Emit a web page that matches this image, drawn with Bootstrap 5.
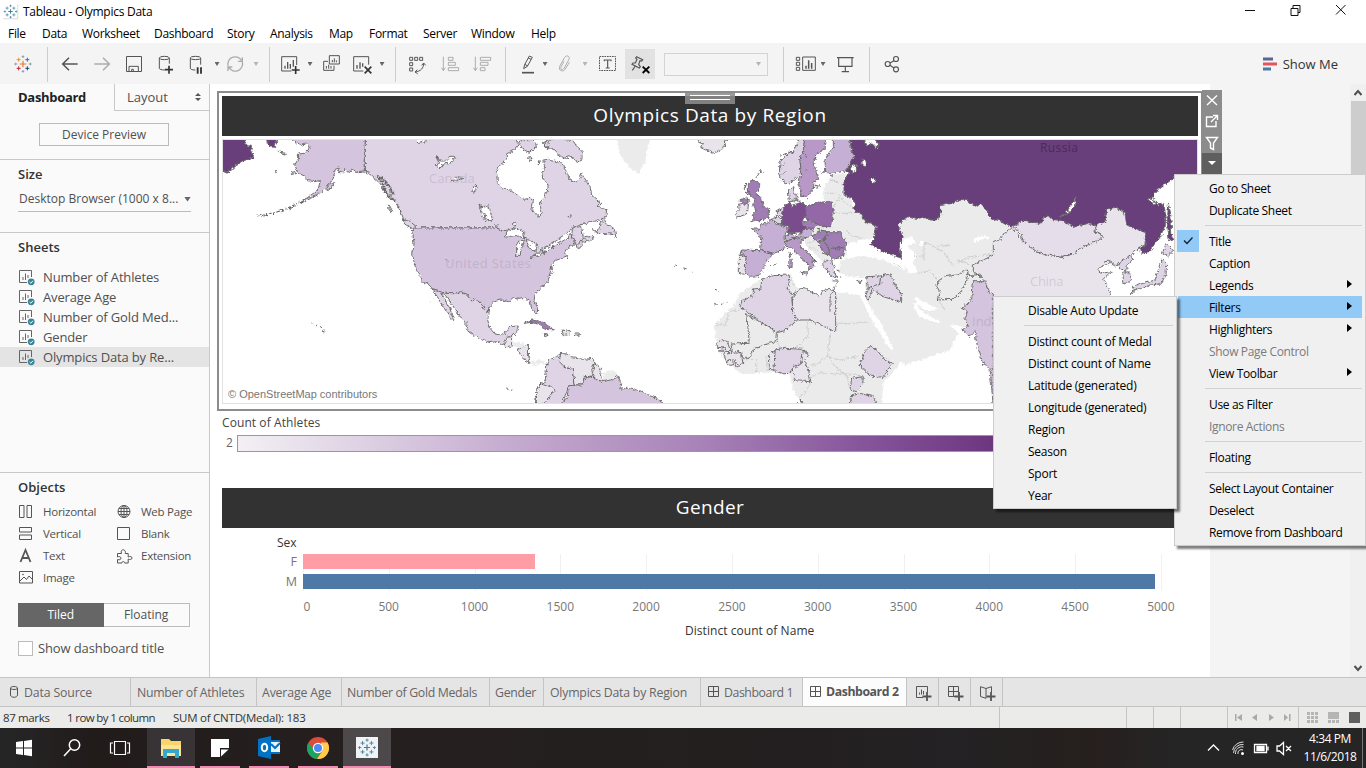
<!DOCTYPE html>
<html lang="en">
<head>
<meta charset="utf-8">
<title>Tableau - Olympics Data</title>
<link href="https://cdn.jsdelivr.net/npm/bootstrap@5.3.0/dist/css/bootstrap.min.css" rel="stylesheet">
<style>
body{width:1366px;height:768px;overflow:hidden;background:#fff;font:12px/16px "Open Sans",sans-serif;color:#000}
svg{display:block;flex:none;overflow:visible}
.ln{fill:none;stroke:#555;stroke-width:3}
.dim{opacity:.45}
.title-row{height:22px;padding-left:3px}
.title-row .name{letter-spacing:-.26px;padding-left:5px;padding-top:1px}
.menu-row{height:21px;padding-left:8px;letter-spacing:-.3px}
.menu-row span{line-height:24px}
.tools{height:41px;background:#f4f4f4;display:grid;grid-template-columns:46px 3px 42px 22px 42px 22px 38px 4px 32px 10px 17px 24px 16px 26px 36px 4px 23px 20px 46px 18px 29px 16px 18px 22px 18px 26px 40px 112px 23px 22px 12px 32px 17px 28px 1fr;align-items:center;padding-top:1px}
.tools>*{justify-self:center}
.tools>i.bar{width:1px;height:35px;background:#ccc}
.caret{width:5px;height:4px;background:#666;clip-path:polygon(0 0,100% 0,50% 100%)}
.pinned{width:30px;height:30px;background:#e2e2e2}
.combo{width:104px;height:23px;border:1px solid #d3d3d3;padding-right:6px}
.work{height:593px}
.side{width:210px;background:#fafafa;border-right:1px solid #c9c9c9;font-size:13px;color:#505050}
.side h2{font-size:13px;line-height:16px;font-weight:600;color:#333;margin:0;padding-left:18px}
.tab-on{width:114px;padding-left:18px;line-height:26px;font-weight:700;color:#222;letter-spacing:-.3px}
.tab-off{width:95px;height:27px;border-left:1px solid #c9c9c9;border-bottom:1px solid #c9c9c9;padding:0 8px 0 12px}
.preview{width:130px;height:23px;margin:12px 0 13px 39px;border:1px solid #bbb;font-size:12px;line-height:21px}
.rule-top{border-top:1px solid #c9c9c9}
.sizer{margin:9px 18px 0;height:21px;border-bottom:1px solid #bbb;font-size:12px;line-height:16px;padding-bottom:4px;padding-left:1px;letter-spacing:.02px}
.sheet{height:20px;padding-left:19px;line-height:20px;gap:8px;letter-spacing:-.15px}
.sheet.on{background:#e4e4e4}
.objs{display:grid;grid-template-columns:24px 74px 24px 1fr;grid-auto-rows:22px;padding-left:19px;align-items:center;font-size:11.5px;letter-spacing:-.25px}
.toggle{margin:14px 19px 0 18px;height:24px;border:1px solid #bbb;line-height:22px;font-size:12px}
.toggle>*{flex:1}.toggle .sel{background:#666;color:#fff;margin:-1px 0 -1px -1px;line-height:24px}
.chk{width:15px;height:15px;border:1px solid #bbb;background:#fff}
.page{width:1000px;background:#fff;padding:7px 7px 0}
.zone{width:986px;height:320px;border:2px solid #8c8c8c;padding:3px}
.hd{height:40px;background:#323232;color:#fff;font-size:19px;line-height:39px;letter-spacing:.35px}
.hd.wide{letter-spacing:.6px}
.atlas{margin-top:3px;height:265px;overflow:hidden;outline:1px solid #e2e2e2;outline-offset:-1px}
.grip{left:466px;top:-2px;width:50px;height:13px;background:#8c8c8ce0;padding:4px 5px}
.grip i{display:block;height:1px;background:#fff;margin-bottom:3px}
.zonebar{left:983px;top:-3px;width:20px;background:#8c8c8c}
.ramp{width:961px;height:17px;border:1px solid #999;background:linear-gradient(90deg,#f3f0f4,#dccfe2 14%,#c6acd0 28%,#a883b8 48%,#845399 66%,#6a347c 80%,#5e2a70)}
.lgd{font-size:12px;color:#444;padding-left:5px;letter-spacing:.08px}
.chart{padding-left:5px;color:#777;font-size:12px}
.rowb{height:20px}.rowb b{width:75px;text-align:right;font-weight:400;font-size:12.500px;margin-right:6px}
.rowb i{height:15px;display:block}
.plot{background:repeating-linear-gradient(90deg,#f0f0f0 0 1px,transparent 1px 85.8px) 81px 0/895px 37px no-repeat;width:976px;height:37px}
.axis{margin-left:38px}
.axis span{width:85.8px;flex:none;text-align:center;font-size:12px}
.axis span:first-child{padding-left:8px}
.gut{width:140px;background:#f4f4f4}
.sb{width:16px;background:#f0f0f0}
.sb .thumb{height:400px;background:#cdcdcd;width:15px}
.tabs{height:30px;background:#e5e5e5;border-top:1px solid #c4c4c4;border-bottom:1px solid #c4c4c4;font-size:12.3px;color:#666;letter-spacing:-.29px}
.tabs>div{border-right:1px solid #c4c4c4;flex:none;height:28px;line-height:30px;white-space:nowrap}
.tabs .cur{background:#fcfcfc;font-weight:700;color:#555;letter-spacing:-.42px;line-height:27px}
.stat{height:21px;background:#ebebea;font-size:11.5px;color:#333;line-height:21px;letter-spacing:-.24px}
.stat .cell{border-left:1px solid #c4c4c4;height:21px}
.task{height:40px;background:linear-gradient(90deg,#262627 0,#211b1a 7%,#261f1f 25%,#231f20 58%,#232224 70%,#261f1d 80%,#252525 86%);color:#fff}
.task>div.app{height:40px;border-bottom:2px solid #ef8ab2;padding-top:2px}
.clock{font-size:12px;line-height:18px;letter-spacing:-.42px}
.pop{position:absolute;background:#f0f0f0;border:1px solid #ccc;box-shadow:3px 3px 2px rgba(0,0,0,.5);padding:2px 3px 3px;letter-spacing:-.34px}
.pop div{height:22px;line-height:23px;padding-left:31px;position:relative}
.pop hr{margin:4px 0;border:0;height:1px;background:#d0d0d0;opacity:1;margin-left:27px}
.pop .off{color:#7b7b7b}.pop .hot{background:#91c9f7}
.pop .more::after{content:"";position:absolute;right:10px;top:6px;border:4px solid transparent;border-left:5px solid #000;border-right:0}
.pop .tick{position:absolute;left:-1px;top:0;width:22px;height:22px;background:#91c9f7}
.p1{left:1174px;top:174px;width:192px;height:372px}
.p2{left:993px;top:296px;width:184px;height:213px;letter-spacing:-.25px}
/* map colours */
.atlas .gy{fill:#ebebeb;stroke:none}.atlas .gl{fill:none;stroke:#cfcfcf;stroke-width:3}
.atlas g.land path{stroke:#666;stroke-width:2.8;stroke-linejoin:round}
.v0{fill:#e9e4ec}.v1{fill:#dfd4e5}.v2{fill:#d4c4dd}.v3{fill:#c6afd4}.v4{fill:#b798c6}.v5{fill:#a17db5}.v6{fill:#9468a7}.v7{fill:#7a4c8d}.v9{fill:#683f7a}.w{fill:#fff}
</style>
</head>
<body class="position-relative d-flex flex-column">
<svg width="0" height="0" class="position-absolute">
<defs>
<g id="logo"><path d="M0-9v18M-9 0h18" stroke-width="3.6"/><path d="M-13-19v12M-19-13h12M13-19v12M7-13h12M-13 7v12M-19 13h12M13 7v12M7 13h12M0-26v9M-4-22h9M0 17v9M-4 22h9M-26 0h9M-22-4v9M17 0h9M22-4v9" stroke-width="2.6"/></g>
<g id="ws" fill="none" stroke="#666" stroke-width="1"><path d="M12.5 7V.5H.5v12H8"/><path d="M4 10V7M6.5 10V3.5M9 8V5"/><circle cx="12.2" cy="11.8" r="3.4" fill="#3c8597" stroke="none"/><path d="M10.6 12l1.2 1.2 2.2-2.4" stroke="#fff"/></g>
<path id="grid4" d="M.5.5h10v10H.5zM5.5 0v11M0 5.5h11" fill="none" stroke="#555"/>
<!-- gives the coastlines their small irregularities -->
<filter id="coast" filterUnits="userSpaceOnUse" x="-100" y="-60" width="3300" height="1000" color-interpolation-filters="sRGB"><feTurbulence type="turbulence" baseFrequency=".07" numOctaves="2" seed="4" result="n"/><feColorMatrix in="n" type="matrix" values="1.500 0 0 0 .2 0 1.500 0 0 .2 0 0 1 0 0 0 0 0 0 1" result="m"/><feDisplacementMap in="SourceGraphic" in2="m" scale="9" xChannelSelector="R" yChannelSelector="G"/></filter>
</defs></svg>

<header class="title-row d-flex align-items-center">
<svg width="15" height="15" viewBox="-29 -29 58 58"><path d="M-28 28H28V-28" fill="none" stroke="#bbb" stroke-width="2"/><use href="#logo" stroke="#3b7c9c"/></svg>
<span class="name">Tableau - Olympics Data</span>
<svg class="ms-auto" width="100" height="12" viewBox="0 0 100 12" style="margin-right:21px"><path d="M0 5.500h10M46 3.500h7v7h-7zM48 3V.500h7v7h-2M91 0l9.500 9.500M100.500 0L91 9.500" fill="none" stroke="#111"/></svg>
</header>
<nav class="menu-row d-flex">
<span style="width:34px">File</span><span style="width:40px">Data</span><span style="width:72px">Worksheet</span><span style="width:73px">Dashboard</span><span style="width:43px">Story</span><span style="width:59px">Analysis</span><span style="width:40px">Map</span><span style="width:54px">Format</span><span style="width:48px">Server</span><span style="width:60px">Window</span><span>Help</span>
</nav>

<div class="tools">
<svg width="24" height="24" viewBox="-36 -36 72 72"><path d="M0-10v20M-10 0h20" stroke="#e8762c" stroke-width="3.500"/><path d="M-13-19v12M-19-13h12" stroke="#eb912c" stroke-width="3"/><path d="M13-19v12M7-13h12" stroke="#5b6591" stroke-width="3"/><path d="M-13 7v12M-19 13h12" stroke="#c72035" stroke-width="3"/><path d="M13 7v12M7 13h12" stroke="#1f447e" stroke-width="3"/><path d="M0-26v8M-4-22h8M0 18v8M-4 22h8M-26 0h9M-22-4v8M17 0h9M22-4v8" stroke="#7099a5" stroke-width="2.500"/></svg>
<i class="bar"></i>
<svg width="24" height="24" viewBox="174 156 72 72"><path class="ln" style="stroke-width:4.500" d="M233 192H190M207 173l-19 19 19 19"/></svg>
<svg class="dim" width="24" height="24" viewBox="270 156 72 72"><path class="ln" style="stroke-width:4.500" d="M283 192h44M309 173l19 19-19 19"/></svg>
<svg width="24" height="24" viewBox="366 156 72 72"><path class="ln" d="M379.500 169.500h45v45h-45zM387 214v-15h28v15M395 214v-6h5v6"/></svg>
<svg width="24" height="24" viewBox="462 156 72 72"><path class="ln" d="M495 210c-10 0-17-2-17-5V174M508 174v17"/><ellipse class="ln" cx="493" cy="174" rx="15" ry="5"/><path d="M507 197v24M495 209h24" stroke="#333" stroke-width="5"/></svg>
<svg width="24" height="24" viewBox="552 156 72 72"><path class="ln" d="M586 210c-9 0-15-2-15-5V174M602 174v20"/><ellipse class="ln" cx="586.500" cy="174" rx="15.500" ry="5"/><path d="M593 202v19M603 202v19" stroke="#333" stroke-width="5.500"/></svg>
<i class="caret"></i>
<svg class="dim" width="24" height="24" viewBox="669 156 72 72"><path class="ln" style="stroke-width:4" d="M684 198a22 22 0 0 1 40-17M727 186a22 22 0 0 1-40 17M714 184h13v-12M697 201h-13v12"/></svg>
<i class="caret dim"></i>
<i class="bar"></i>
<svg width="24" height="24" viewBox="834 156 72 72"><path class="ln" d="M890 195V170H845v43h29"/><path d="M855 206v-9M863 206v-20M871 206v-14M880 200v-20" stroke="#555" stroke-width="4"/><path d="M887 198v24M875 210h24" stroke="#333" stroke-width="5"/></svg>
<i class="caret"></i>
<svg width="24" height="24" viewBox="957 156 72 72"><path class="ln" d="M988 167h30v25h-30zM984 184h-13v27h31v-14"/><path d="M997 187v-7M1003 187v-12M1009 187v-6M979 206v-8M986 206v-12M993 206v-8" stroke="#555" stroke-width="3"/></svg>
<svg width="24" height="24" viewBox="1050 156 72 72"><path class="ln" d="M1106 194V170h-45v43h29"/><path d="M1071 206v-11M1080 206v-19M1088 200v-10" stroke="#555" stroke-width="4"/><path d="M1094 200l20 20M1114 200l-20 20" stroke="#333" stroke-width="5"/></svg>
<i class="caret"></i>
<i class="bar"></i>
<svg width="24" height="24" viewBox="15 156 72 72"><path class="ln" d="M29 172h9v9h-9zM44 172h9v9h-9zM59 172h9v9h-9zM29 188h9v9h-9zM29 204h9v9h-9zM71 190c0 14-9 24-25 26M65 196l6-7 6 7M52 209l-7 7 8 5"/></svg>
<svg class="dim" width="24" height="24" viewBox="114 156 72 72"><path class="ln" d="M130 170v41M124 203l6 9 6-9M145 172h14v9h-14zM145 187h21v9h-21zM145 203h31v9h-31z"/></svg>
<svg class="dim" width="24" height="24" viewBox="210 156 72 72"><path class="ln" d="M226 170v41M220 203l6 9 6-9M241 172h31v9h-31zM241 187h23v9h-23zM241 203h14v9h-14z"/></svg>
<i class="bar"></i>
<svg width="24" height="24" viewBox="348 156 72 72"><path class="ln" d="M371 206l3-12 14-26 9 4-15 27zM374 193l10 5M384 173l9 5"/><path d="M366 218h36" stroke="#555" stroke-width="5"/></svg>
<i class="caret"></i>
<svg class="dim" width="24" height="24" viewBox="459 156 72 72"><path class="ln" d="M492 184l-9 17c-3 8 5 11 9 4l15-27c4-10-8-14-13-6l-15 27c-5 13 11 19 17 8l12-20"/></svg>
<i class="caret dim"></i>
<svg width="24" height="24" viewBox="585 156 72 72"><path class="ln" stroke-dasharray="5 2.500" d="M598.500 169.500h48v42h-48z"/><path class="ln" style="stroke-width:3.500" d="M613 184v-4h20v4M623 180v24M617 204h12"/></svg>
<div class="pinned d-flex justify-content-center align-items-center"><svg width="24" height="24" viewBox="684 156 72 72"><path class="ln" style="stroke-width:3.500" d="M710 170l18 9-3 4-5-1-4 11 5 7-3 4-22-11 3-4 7 0 5-11-4-4zM706 198l-9 13"/><path d="M728 200l20 19M748 200l-20 19" stroke="#000" stroke-width="5.500"/></svg></div>
<div class="combo d-flex justify-content-end align-items-center"><i class="caret dim"></i></div>
<i class="bar"></i>
<svg width="24" height="24" viewBox="1182 156 72 72"><path class="ln" d="M1189 172h10v9h-10zM1189 187h10v9h-10zM1189 202h10v9h-10zM1208 171h38v40h-38z"/><path d="M1218 206v-9M1226 206v-25M1235 206v-17" stroke="#555" stroke-width="4.500"/></svg>
<i class="caret"></i>
<svg width="24" height="24" viewBox="1300 156 72 72"><path class="ln" style="stroke-width:3.500" d="M1312 173h50M1317 173v26h40v-26M1337 199v15M1326 215h22"/></svg>
<i class="bar"></i>
<svg width="24" height="24" viewBox="1440 156 72 72"><path class="ln" style="stroke-width:3.500" d="M1470 189l12-7M1470 196l12 8"/><g class="ln" style="stroke-width:3.500"><circle cx="1463" cy="192" r="7.500"/><circle cx="1488" cy="177" r="7.500"/><circle cx="1488" cy="208" r="7.500"/></g></svg>
<div class="d-flex align-items-center" style="justify-self:end;margin-right:28px;gap:6px;font-size:13px;color:#333"><svg width="14" height="14"><path d="M0 2h10" stroke="#5b6591" stroke-width="3"/><path d="M0 7h14" stroke="#e15759" stroke-width="3"/><path d="M0 12h8" stroke="#4e79a7" stroke-width="3"/></svg><span>Show Me</span></div>
</div>

<main class="work d-flex">
<aside class="side d-flex flex-column flex-shrink-0">
<div class="d-flex"><div class="tab-on">Dashboard</div><div class="tab-off d-flex justify-content-between align-items-center"><span>Layout</span><svg width="6" height="8"><path d="M0 3l3-3 3 3zM0 5l3 3 3-3z" fill="#555"/></svg></div></div>
<div class="preview text-center">Device Preview</div>
<section class="rule-top" style="height:73px;padding-top:6px"><h2>Size</h2><div class="sizer d-flex justify-content-between align-items-center"><span>Desktop Browser (1000 x 8...</span><i class="caret" style="width:7px;height:5px"></i></div></section>
<section class="rule-top" style="height:240px;padding-top:6px"><h2 style="margin-bottom:12px">Sheets</h2>
<div class="sheet d-flex align-items-center"><svg width="16" height="15"><use href="#ws"/></svg>Number of Athletes</div>
<div class="sheet d-flex align-items-center"><svg width="16" height="15"><use href="#ws"/></svg>Average Age</div>
<div class="sheet d-flex align-items-center"><svg width="16" height="15"><use href="#ws"/></svg>Number of Gold Med...</div>
<div class="sheet d-flex align-items-center"><svg width="16" height="15"><use href="#ws"/></svg>Gender</div>
<div class="sheet on d-flex align-items-center"><svg width="16" height="15"><use href="#ws"/></svg>Olympics Data by Re...</div>
</section>
<section class="rule-top flex-grow-1" style="padding-top:6px"><h2 style="margin-bottom:6px">Objects</h2>
<div class="objs">
<svg width="14" height="14"><path d="M.5.5h4.500v12H.5zM8 .5h4.500v12H8z" fill="none" stroke="#555"/></svg><span>Horizontal</span>
<svg width="14" height="14"><g fill="none" stroke="#555"><circle cx="7" cy="6.500" r="6"/><ellipse cx="7" cy="6.500" rx="3" ry="6"/><path d="M1 6.500h12M7 .5v12M2 3.500h10M2 9.500h10"/></g></svg><span>Web Page</span>
<svg width="14" height="14"><path d="M.5.5h12V5H.5zM.5 8h12v4.500H.5z" fill="none" stroke="#555"/></svg><span>Vertical</span>
<svg width="14" height="14"><path d="M.5.5h12v12H.5z" fill="none" stroke="#555"/></svg><span>Blank</span>
<svg width="14" height="14"><path d="M1.500 13L6.500 1 11.500 13M3.500 9h6" fill="none" stroke="#555" stroke-width="1.800"/></svg><span>Text</span>
<svg width="16" height="15" viewBox="0 0 16 15"><path d="M.5 4.500h4C3.500 2 5 .5 6.500.8S9 3 8.200 4.500h3V8c2-1 3.800-.5 3.800 1s-2 2-3.800 1v4H7.500c.5-2-3-2-2.500 0H.5V10.500c2 .8 3.500 0 3.500-1.300S2.200 7 .5 8z" fill="none" stroke="#555"/></svg><span>Extension</span>
<svg width="14" height="14"><path d="M.5.500h13v11.500H.5zM1 10l4-4 2.500 2.500L10 5l3 3" fill="none" stroke="#555"/><circle cx="4" cy="3.500" r=".8" fill="#555"/></svg><span>Image</span>
</div>
<div class="toggle d-flex text-center"><span class="sel">Tiled</span><span>Floating</span></div>
<div class="d-flex align-items-center" style="margin:13px 0 0 18px;gap:5px;letter-spacing:-.12px"><span class="chk"></span>Show dashboard title</div>
</section>
</aside>

<div class="page flex-shrink-0">
<section class="zone position-relative">
<div class="hd wide text-center">Olympics Data by Region</div>
<div class="atlas position-relative">
<svg width="976" height="265" viewBox="0 0 976 265">
<g class="land" transform="translate(-2 -9) scale(.33333)" filter="url(#coast)">
<path class="v9" d="M9 20H72L78 45 98 50 95 62 101 84 90 88 72 92 50 105 35 120 22 130 0 120V20Z"/>
<path class="v9" d="M138 20H175L165 52 150 50 142 38Z"/>
<path class="v2" d="M218 20H436V126L415 128 395 120 388 128 375 115 372 128 355 128 362 112 345 120 340 145 325 165 300 190 275 205 250 214 265 203 285 190 295 175 301 152 285 155 265 152 258 140 240 132 230 118 224 105 236 85 235 72 255 70 268 55 262 42 245 45 225 38Z"/>
<path class="v2" d="M320 175l10-12 12-5-5 14-14 10zM215 127l10-2 3 6-9 2zM175 65l22 5 3 7-20-7zM165 122l5 3z"/>
<path fill="none" style="stroke-width:6" stroke-dasharray="11 5 4 6 8 4" d="M250 214Q210 236 175 246T112 260"/>
<path class="v1" d="M436 20H890L895 42 885 60 862 72 862 88 840 105 830 130 832 155 850 177 870 180 890 195 910 208 932 205 940 215 936 238 945 250 957 262 967 250 962 235 962 215 975 200 984 178 984 165 972 150 968 130 973 115 972 90 982 88 995 92 1015 95 1030 105 1038 125 1050 150 1065 158 1078 150 1085 130 1095 150 1110 170 1115 195 1130 210 1145 220 1134 232 1150 235 1163 240 1160 262 1145 268 1120 275 1080 285 1060 295 1040 312 1020 325 990 345 960 372 930 378 915 325 880 320 860 305 840 300 828 294H595L577 292 550 265 540 240 525 215 500 195 485 170 470 150 450 130 436 126Z"/>
<path class="v1" d="M972 45L985 30 1020 27 1060 32 1075 55 1088 70 1085 90 1075 97 1050 80 1035 85 1015 75 1000 58 975 55ZM905 29L898 45 912 60 930 68 940 60 952 45 935 29ZM922 85l15-3-5 12zM955 95l6 2-3 8zM970 40l15-8 5 20-14 3zM548 268l20 5 25 20 3 18-20-15-22-14zM505 222l8 12 2 14-8-10z"/>
<path class="v1" d="M1150 265L1132 310 1175 312 1187 320 1185 305 1178 290 1160 285ZM1075 310L1090 325 1120 318 1122 327 1095 338 1075 358 1072 345 1090 335 1065 320Z"/>
<path class="v2" d="M585 294H828L845 303 870 300 885 310 915 325 950 340 952 378 990 356 1010 345 1040 328 1055 312 1065 345 1045 352 1035 370 1042 382 1010 390 997 403 990 432 982 458 960 475 945 495 942 515 953 535 952 550 943 550 935 535 930 512 915 505 900 508 880 505 868 515 845 510 825 515 810 530 808 545 795 543 785 520 770 508 755 513 740 495 725 487 712 492 680 490 640 480 625 462 610 457 595 425 583 400 578 375 582 340 577 300Z"/>
<path class="v1" d="M1055 312L1060 290 1085 292 1090 325 1070 348Z"/>
<path class="v1" d="M640 480L680 490 712 492 725 487 740 495 755 513 770 508 785 520 795 543 808 545 803 570 810 595 825 612 845 615 862 605 868 590 895 588 890 605 878 620 862 622 858 640 845 645 830 635 810 638 775 625 745 605 738 590 738 575 720 560 700 530 680 500 665 488 672 505 685 525 695 550 705 568 695 568 680 545 665 525 655 505 645 490Z"/>
<path class="v0" d="M850 645L862 622 878 620 877 650 862 654ZM892 660L925 645 926 680 930 700 915 690 900 672Z"/>
<path class="gy" style="stroke:none" d="M878 637L910 640 925 650 900 655 882 650ZM935 698q25-14 45 0l-5 8q-16-9-34 2Z"/>
<path class="w" d="M855 320L870 300 885 294 910 305 915 325 895 318 875 322ZM890 348L900 332 913 336 903 358 900 380 890 378ZM918 332L940 335 955 350 948 360 935 362 925 345ZM928 383L950 370 978 368 960 376ZM960 360L985 352 1000 352 980 364ZM648 76L660 98 645 108 660 114 675 100 690 102 708 82 690 82 672 94 660 92ZM692 155L710 143 728 145 710 152ZM758 185L766 166 772 172 764 190ZM780 225L790 262 800 276 794 250 808 272 818 270 804 222 795 236ZM826 288l6-4 3 8zM880 280l5-2 3 8-6 2zM588 30l10 10 12-4 10-5M1045 262l7-5 2 8z"/>
<path fill="none" style="stroke-width:7" stroke-dasharray="7 2" d="M472 138Q486 150 492 172T525 214M485 140Q510 170 522 196"/>
<path fill="none" d="M494 150l14 26 6 24M530 220l12 24M275 580l6 1M290 585l4 2M300 592l8 6 8 8-8-2M675 385l8 8M855 776l10 2M866 778l10 3M628 514l3 2M1005 402l-10 12 4 14-11 12"/>
<path class="v5" d="M915 580L935 570 965 575 985 588 1005 600 975 598 960 583 935 577Z"/>
<path class="v0" d="M1025 600L1050 605 1052 612 1030 618ZM1063 612h18l-2 7h-15zM970 613l15 2-8 5zM1127 310l-8-16"/>
<path class="v1" d="M945 830L950 790 960 765 975 760 980 710 988 690 1010 680 1025 668 1018 690 1035 712 1060 718 1065 765 1045 768 1040 790 1020 830Z"/>
<path class="v0" d="M1022 670L1040 672 1055 683 1090 688 1118 685 1125 700 1115 720 1120 738 1095 740 1088 765 1065 765 1060 718 1035 712 1018 695ZM1125 700L1145 715 1140 725 1150 755 1130 750 1120 738ZM960 760L995 772 1005 780 990 800 965 830H948L950 790Z"/>
<path class="gy" style="stroke:none" d="M1150 728L1185 722 1198 740 1175 750 1152 752Z"/>
<path class="v2" d="M1020 830L1042 800 1045 768 1065 765 1090 765 1095 745 1120 738 1130 750 1150 755 1175 750 1194 740 1205 765 1198 778 1225 775 1260 785 1300 800 1345 830Z"/>
</g>
<g class="land" transform="translate(318 -9) scale(.33333)" filter="url(#coast)">
<path class="gy" style="stroke:none" d="M228 20H332L322 60 315 100 297 132 270 115 245 85 235 55Z"/>
<path class="gy" style="stroke:none" d="M855 165L880 135 920 130 915 180 950 240 990 275 1035 290 1000 325 960 330 940 350 915 380 870 385 850 398 800 350 790 320 820 290 880 290 880 235 850 210Z"/>
<path class="gy" style="stroke:none" d="M662 450L750 432 765 470 800 478 840 498 850 480 890 487 960 495 990 560 1020 610 1050 660 1110 650 1075 710 1030 760 1025 830H790L760 780 750 740 730 725 650 730 610 735 560 700 530 650 525 590 545 560 580 530 600 490Z"/>
<path class="v0" d="M480 20L473 36 490 42 485 55 500 60 520 70 550 58 562 20Z"/>
<path class="v1" d="M780 20H795L790 60 780 90 785 140 770 145 745 165 725 150 718 130 720 95 745 75 765 60Z"/>
<path class="v4" d="M795 20H860L855 60 830 75 820 105 830 120 835 145 822 160 820 180 805 198 785 200 778 175 775 150 785 140 780 90 790 60Z"/>
<path class="v3" d="M880 20H928L935 60 942 80 920 122 870 132 857 125 855 90 865 75 880 55Z"/>
<path class="v5" d="M625 160L640 150 658 160 662 175 648 190 665 205 670 230 688 240 688 262 660 272 632 278 645 265 635 258 650 240 640 230 645 210 632 200 625 180Z"/>
<path class="v5" d="M600 212l20-8 8 14-16 6zM662 125l4-4 1 8zM612 168l8-8-4 16zM618 185l8-4-2 14z"/>
<path class="v0" d="M596 226L612 222 625 225 622 252 590 262 588 250 597 243Z"/>
<path class="v1" d="M745 182L765 170 762 188 772 198 770 212 748 215ZM712 243L735 232 730 258 712 260ZM693 268L712 262 728 268 728 285 710 280Z"/>
<path class="v7" d="M735 225L750 220 755 230 790 218 800 232 798 262 785 275 800 295 785 308 745 312 745 290 728 285 728 250Z"/>
<path class="v6" d="M798 232L840 216 850 220 868 212 877 225 880 250 875 290 845 290 820 275 797 265Z"/>
<path class="v5" d="M785 278L810 268 835 285 815 298 795 292ZM815 320L845 303 865 308 855 328 830 335ZM865 308L905 308 912 328 920 345 895 358 865 352 850 330ZM835 335L850 332 865 352 865 375 850 370ZM868 356L918 350 910 380 880 388 868 375Z"/>
<path class="v3" d="M635 296L660 298 668 280 680 282 693 268 710 282 735 290 745 300 732 320 735 345 730 360 700 372 670 365 662 358 665 325 650 308ZM618 378L600 370 605 360 665 362 700 375 680 395 672 415 655 440 630 442 615 430Z"/>
<path class="v0" d="M598 375L618 380 615 432 598 432Z"/>
<path class="v3" d="M735 318L760 314 768 325 738 332ZM768 322L785 310 792 298 820 298 815 318 790 325ZM835 298l20 5-5 0z"/>
<path class="v4" d="M735 335L765 325 792 330 780 340 785 355 810 375 830 395 816 392 822 410 810 420 805 402 775 378 760 355 740 352ZM782 428l24-4-4 12z"/>
<path class="v4" d="M746 388h11l-1 24h-10zM748 372l6-4 1 12-5 3z"/>
<path class="v1" d="M848 398L868 388 878 395 872 402 885 412 878 418 890 440 872 440 862 420 850 412ZM878 452l18 2M885 405l6 4M893 420l8 4M900 440l8 5M950 455l16-4-6 8zM700 404l10-2M690 410l3-1M828 170l10-4-5 12zM843 130l14-3"/>
<path class="v1" d="M665 450L700 437 747 435 750 455 742 470 755 500 760 550 775 568 735 602 710 608 600 530 605 515 640 495 640 480 662 478Z"/>
<path class="v0" d="M765 490L785 475 800 478 840 500 848 482 870 478 887 487V602L875 600 810 570 775 570 758 550 757 510Z"/>
<path class="gy" d="M620 552L712 608 710 635 670 645 640 660 630 685 610 685 600 665 580 665 575 642 628 640Z"/>
<path class="v0" d="M530 640L545 628 565 640 575 665 535 663 558 654 532 652ZM550 672L605 668 608 700 590 710 585 690 570 690 562 700ZM568 690a10 10 0 1 0 8 0z"/>
<path class="v1" d="M705 660L735 655 790 658 805 672 785 700 760 710 750 730 720 732 700 715Z"/>
<path class="v0" d="M688 675L705 662 702 720 690 718ZM790 660L805 680 795 692 805 715 812 755 762 752 765 735 750 725 785 700Z"/>
<path class="v1" d="M990 650L975 665 960 705 990 738 1030 742 1060 700 1035 690 1010 660ZM935 745L970 740 968 765 950 785 930 780ZM930 830L935 798 960 790 1000 800 1015 830ZM775 822l10-12 5 12z"/>
<path class="gl" style="stroke:#ccc" d="M528 585L560 585 565 545 600 540M888 580H985M803 570L805 620 775 650 770 657M875 600L862 680 830 705 812 705M862 680L900 690 955 680M870 690L905 730 960 735M712 635L720 655M650 690V730M680 680L685 725M610 690L650 688M815 740L840 728 920 735 930 780M810 760L795 790 780 800M755 440L765 470M855 190L890 190 905 200M878 235L900 205 935 230M875 250L940 250M800 340L840 330M810 350L835 365M870 150L915 165M920 300L935 320 965 325"/>
<path fill="none" d="M405 408l6 2M430 414l10 2M458 425l5 6M528 478l6 2M520 520l10 4M540 524l10-2M556 518l4 6M658 128l-8 14M720 80l30-14M722 110l15-8M724 135l14-6M740 75l20-8M870 140l12-3M796 72l4 8M798 118l3 3M762 205l14 8M772 215l10-2M800 205l5 2"/>
</g>
<g class="land" transform="translate(608 -9) scale(.33333)" filter="url(#coast)">
<path class="gy" style="stroke:none" d="M205 262L325 255 330 210 450 210 560 290 500 400 500 560 455 590 400 592 330 575 275 545 262 520 250 520 265 560 320 580 352 575 385 610 360 660 230 705 205 690 160 590 120 530 105 505 110 440 60 442 28 425 30 392 100 378 150 385 180 400 225 425Z"/>
<path class="w" style="stroke:none" d="M222 325L250 322 255 340 235 350 262 378 250 395 262 425 235 432 220 400 215 370ZM50 345L72 338 92 345 110 330 125 350 180 385 150 390 110 378 50 388ZM430 330q20-15 48-10l-4 8q-20-4-42 12zM270 335l14 2-4 14-12-2zM255 500l35 20 38 18-38 6-30-25Z"/>
<path class="v9" d="M60 20H1110V135L1035 142 1010 160 985 180 960 210 985 225 1000 220 1008 260 1005 295 985 330 960 365 935 370 930 352 945 345 947 308 925 300 890 285 885 250 862 235 830 240 825 275 800 290 775 280 750 290 735 292 700 275 670 272 655 258 642 262 638 282 610 280 580 272 545 292 510 272 485 268 465 235 455 222 435 230 415 215 400 208 370 218 330 228 335 245 322 270 300 270 280 262 258 268 240 262 215 272 205 285 210 305 220 320 208 345 215 385 160 365 122 345 135 330 132 312 142 290 105 275 95 252 78 248 72 235 80 225 65 205 42 195 42 150 60 130 50 125 72 80Z"/>
<path class="v9" d="M1015 222L1022 250 1025 310 1032 330 1018 335 1012 280Z"/>
<path class="w" d="M62 112L78 103 84 122 68 130ZM98 85l12 15-4 12-10-12zM122 150l8-6 6 12-8 4zM100 25L112 48 125 40 140 55 148 45 132 25ZM738 200L737 225 715 250 690 262 712 245 728 222ZM955 210l20-4-5 10 14 2-6 10z"/>
<path class="v0" d="M545 292L562 310 580 335 620 365 650 375 700 382 735 370 760 350 800 330 822 320 795 305 795 288 825 275 830 240 862 235 885 250 890 285 925 300 947 308 945 345 930 352 905 375 870 402 850 410 845 395 805 415 815 430 845 425 820 450 838 480 842 498V550H500L480 490 455 440 430 425 430 405 490 375 490 340 515 325 520 312 540 300Z"/>
<path class="v1" style="fill:#e5ddea" d="M552 292L580 272 610 280 638 282 642 262 655 258 670 272 700 275 735 292 775 280 800 290 792 305 822 320 800 335 760 350 735 370 700 382 650 375 620 365 580 335 575 318Z"/>
<path class="v1" d="M862 405L905 375 908 388 892 405 890 425 872 420ZM878 430L898 425 905 452 882 462ZM905 492L912 470 935 462 975 450 990 410 998 390 1010 400 1008 435 995 462 960 465 930 480 920 475ZM1008 340L1032 362 1015 378 998 372Z"/>
<path fill="none" d="M940 475l14-4M985 455l5 8M855 408l-12-15-20 2"/>
<path class="v2" d="M430 455L465 455 475 485 490 495V830L480 715 462 705 440 640 435 605 420 620 395 600 415 590 405 565 412 545 395 535 425 510Z"/>
<path class="gy" d="M325 455L345 440 380 435 412 420 412 445 395 485 370 508 325 510 330 490 320 470Z"/>
<path fill="none" d="M412 420L420 440 445 432 468 455M412 435L435 440"/>
<path class="v1" d="M110 440L155 438 180 432 195 465 215 495 215 518 160 500 130 480 115 510 105 505 115 475Z"/>
<path fill="none" d="M155 438L152 462 115 478M20 460L0 505V545"/>
<path class="gl" style="stroke:#ccc" d="M282 390V340L305 345 345 370 370 410M255 380L282 378M265 430L300 420 322 450M325 350L360 345M385 400L410 385 490 372M380 390L420 405M190 400L215 415M325 510L345 540"/>
</g>
<g font-size="13" fill="#8a7a96" fill-opacity=".27" font-family="Open Sans"><text x="207" y="44">Canada</text><text x="223" y="129" letter-spacing=".4">United States</text><text x="818" y="13" font-size="12" letter-spacing=".4" fill="#2e1a3a" fill-opacity=".55">Russia</text><text x="808" y="147" letter-spacing="-.3">China</text><text x="750" y="187">India</text></g>
<text x="6" y="259" font-size="11" fill="#777" font-family="Liberation Sans">© OpenStreetMap contributors</text>
</svg>
</div>
<div class="grip position-absolute"><i></i><i></i></div>
<div class="zonebar position-absolute d-flex flex-column"><svg width="20" height="84" fill="none" stroke="#fff" stroke-width="1.400"><path d="M0 63h20v21H0z" fill="#5f5f5f" stroke="none"/><path d="M5 5.500l10 9.500M15 5.500L5 15M11 27H4.500v9.500H14V31M9 32l6-6M11 25.500h4.500V30M4.500 47.500h11L11.500 53v6.500l-3-1.500v-5z"/><path d="M6 71h8l-4 4z" fill="#fff" stroke="none"/></svg></div>
</section>
<section class="lgd" style="padding-top:4px">Count of Athletes
<div class="d-flex" style="margin-top:4px"><span style="width:15px;padding-left:4px;color:#666">2</span><span class="ramp"></span></div>
</section>
<section class="chart" style="margin-top:36px">
<div class="hd text-center" style="width:976px">Gender</div>
<div style="padding:7px 0 3px 55px;color:#333">Sex</div>
<div class="plot">
<div class="rowb d-flex"><b>F</b><i style="width:232px;background:#ff9da7"></i></div>
<div class="rowb d-flex"><b>M</b><i style="width:852px;background:#4e79a7"></i></div></div>
<div class="axis d-flex" style="margin-top:8px"><span>0</span><span>500</span><span>1000</span><span>1500</span><span>2000</span><span>2500</span><span>3000</span><span>3500</span><span>4000</span><span>4500</span><span>5000</span></div>
<div style="padding:8px 0 0 463px;color:#333;letter-spacing:.05px">Distinct count of Name</div>
</section>
</div>
<div class="gut flex-shrink-0"></div>
<div class="sb flex-shrink-0 d-flex flex-column align-items-center"><svg width="16" height="17"><path d="M4.500 11l3.500-4 3.500 4" fill="none" stroke="#505050" stroke-width="2"/></svg><div class="thumb"></div><svg class="mt-auto" width="16" height="17"><path d="M4.500 6l3.500 4 3.500-4" fill="none" stroke="#505050" stroke-width="2"/></svg></div>
</main>

<div class="tabs d-flex">
<div class="d-flex" style="width:131px;padding-left:10px;gap:6px;letter-spacing:-.15px"><svg width="8" height="12" style="margin-top:8px"><path d="M.5 2v7c0 3 7 3 7 0V2M.5 2c0-2 7-2 7 0s-7 2-7 0" fill="none" stroke="#555"/></svg>Data Source</div>
<div style="width:126px;padding-left:6px">Number of Athletes</div>
<div style="width:85px;padding-left:5px;letter-spacing:-.15px">Average Age</div>
<div style="width:148px;padding-left:5px;letter-spacing:-.33px">Number of Gold Medals</div>
<div style="width:54px;padding-left:5px">Gender</div>
<div style="width:157px;padding-left:6px;letter-spacing:-.22px">Olympics Data by Region</div>
<div class="d-flex" style="width:102px;padding-left:7px;gap:5px;letter-spacing:-.42px"><svg width="11" height="11" style="margin-top:8px"><use href="#grid4"/></svg>Dashboard 1</div>
<div class="cur d-flex" style="width:104px;padding-left:7px;gap:5px"><svg width="11" height="11" style="margin-top:8px"><use href="#grid4"/></svg>Dashboard 2</div>
<div style="width:32px;padding:8px 0 0 9px"><svg width="17" height="16"><path d="M11.500 6V.5H.5v11H7M3.500 8.500V6.500M5.500 8.500v-5M7.500 8.500V5" fill="none" stroke="#555"/><path d="M11 6v9M6.500 10.500h9" stroke="#555" stroke-width="1.800"/></svg></div>
<div style="width:32px;padding:8px 0 0 9px"><svg width="17" height="16"><use href="#grid4"/><path d="M11 6v9M6.500 10.500h9" stroke="#555" stroke-width="1.800"/></svg></div>
<div style="width:32px;padding:8px 0 0 9px"><svg width="17" height="16"><path d="M11.500 6V.7L6 2.500.5.7v9.800L6 12.300V2.500" fill="none" stroke="#555"/><path d="M11 6v9M6.500 10.500h9" stroke="#555" stroke-width="1.800"/></svg></div>
</div>
<div class="stat d-flex">
<span style="width:64px;padding-left:3px;letter-spacing:-.36px">87 marks</span><span style="width:109px;padding-left:3px;letter-spacing:-.62px">1 row by 1 column</span><span style="width:826px">SUM of CNTD(Medal): 183</span>
<span class="cell" style="width:127px"></span><span class="cell" style="width:27px"></span><span class="cell" style="width:27px"></span><span class="cell" style="width:47px"></span>
<span class="cell d-flex align-items-center" style="width:71px"><svg width="70" height="9" fill="#aaa"><path d="M7 1h1.500v7H7zM14 1v7l-5-3.500zM29 1v7l-5-3.500zM41 1v7l5-3.500zM56 1v7l4-3.500zM61 1h1.500v7H61z"/></svg></span>
<span class="cell d-flex align-items-center" style="width:67px"><svg width="66" height="11"><path d="M8 0h3v3H8zM12 0h3v3h-3zM16 0h3v3h-3zM8 4h3v3H8zM12 4h3v3h-3zM16 4h3v3h-3zM8 8h3v3H8zM12 8h3v3h-3zM16 8h3v3h-3zM29 0h11v7H29zM29 8h3v3h-3zM33 8h3v3h-3zM37 8h3v3h-3z" fill="#b5b5b5"/><path d="M50 0h11v11H50z" fill="#5f5f5f"/></svg></span>
</div>
<footer class="task d-flex">
<svg width="48" height="40"><path d="M16 14l7-1v6.500h-7zM24 12.900l8-1.200v7.800h-8zM16 20.500h7V27l-7-1zM24 20.500h8v7.800L24 27z" fill="#fff"/></svg>
<svg width="48" height="40" fill="none" stroke="#fff" stroke-width="1.500"><circle cx="26.500" cy="17" r="5.200"/><path d="M22.500 21L16 28"/></svg>
<svg width="51" height="40" fill="none" stroke="#fff" stroke-width="1.200"><path d="M18.500 13.500h11v13h-11zM17 15h-2.500v10H17M31 15h2.500v10H31"/></svg>
<div class="app d-flex justify-content-center" style="width:48px;background:#383435"><svg width="24" height="34"><path d="M2 9h8l2 2h10v15H2z" fill="#f9d56c"/><path d="M2 15h20v11H2z" fill="#fde493"/><path d="M4 19h16v9h-4v-5H8v5H4z" fill="#34a8cf"/></svg></div>
<div class="app d-flex justify-content-center" style="width:40px;margin-left:5px"><svg width="20" height="34"><path d="M1 9h18v9h-9v9H1z" fill="#fff"/><path d="M10 27v-8h9v8z" fill="#222"/><path d="M11 26.500l7.500-7H11z" fill="#fff"/></svg></div>
<div class="app d-flex justify-content-center" style="width:40px;margin-left:9px"><svg width="24" height="34"><path d="M11 10h12v14H11z" fill="#0072c6"/><path d="M13 12h10v10H13z" fill="#eaf3fb"/><path d="M14 14l4 4 5-5" fill="none" stroke="#0072c6" stroke-width="2"/><path d="M1 9l13-3v23L1 26z" fill="#0072c6"/><ellipse cx="7.500" cy="17.500" rx="2.700" ry="3.700" fill="none" stroke="#fff" stroke-width="2"/></svg></div>
<div class="app d-flex justify-content-center" style="width:40px;margin-left:9px"><svg width="24" height="34"><circle cx="12" cy="18" r="11" fill="#dd4b39"/><path d="M2.500 12.500A11 11 0 0 0 11 29l5-9-8 0z" fill="#1da462"/><path d="M21.500 12.500A11 11 0 0 1 11 29l6-9-2-7.500z" fill="#ffcd46"/><circle cx="12" cy="18" r="5.200" fill="#fff"/><circle cx="12" cy="18" r="4" fill="#4c8bf5"/></svg></div>
<div class="app d-flex justify-content-center" style="width:48px;margin-left:5px;background:#4d494a"><svg width="22" height="34"><path d="M0 7h22v21H0z" fill="#eef3f6"/><use href="#logo" transform="translate(11 17.500) scale(.34)" stroke="#4a7b96"/></svg></div>
<svg class="ms-auto" width="96" height="40" fill="none" stroke="#fff" stroke-width="1.300"><path d="M8 22.500l5.500-5.500L19 22.500M54.500 16.500h12v8h-12zM68 18.500v4M77 18h2.500l4-3.500v12l-4-3.500H77zM86 18l5 5M91 18l-5 5"/><path d="M38 26a3.500 3.500 0 0 1 5-4M35.500 26a6.500 6.500 0 0 1 8-7M33.500 25a9 9 0 0 1 10-8.500M32.500 22a11 11 0 0 1 11-8" stroke-width="1" stroke="#ddd"/><path d="M57 18.500h7v4h-7z" fill="#fff"/><circle cx="42.500" cy="25.500" r="1.500" fill="#fff" stroke="none"/></svg>
<div class="clock text-center" style="width:60px;margin-left:4px;padding-top:2px;margin-right:2px">4:34 PM<br>11/6/2018</div><i style="width:1px;background:#777;margin-right:3px"></i>
</footer>

<div class="pop p1">
<div>Go to Sheet</div><div>Duplicate Sheet</div><hr>
<div><svg class="tick" viewBox="0 0 22 22"><path d="M7 10.500l3 3 5.500-6" fill="none" stroke="#123" stroke-width="1.300"/></svg>Title</div><div>Caption</div><div class="more">Legends</div><div class="more hot">Filters</div><div class="more">Highlighters</div><div class="off">Show Page Control</div><div class="more">View Toolbar</div><hr>
<div>Use as Filter</div><div class="off">Ignore Actions</div><hr><div>Floating</div><hr>
<div>Select Layout Container</div><div>Deselect</div><div>Remove from Dashboard</div>
</div>
<div class="pop p2">
<div>Disable Auto Update</div><hr><div>Distinct count of Medal</div><div>Distinct count of Name</div><div>Latitude (generated)</div><div>Longitude (generated)</div><div>Region</div><div>Season</div><div>Sport</div><div>Year</div>
</div>
<script src="https://cdn.jsdelivr.net/npm/bootstrap@5.3.0/dist/js/bootstrap.bundle.min.js"></script>
</body>
</html>
